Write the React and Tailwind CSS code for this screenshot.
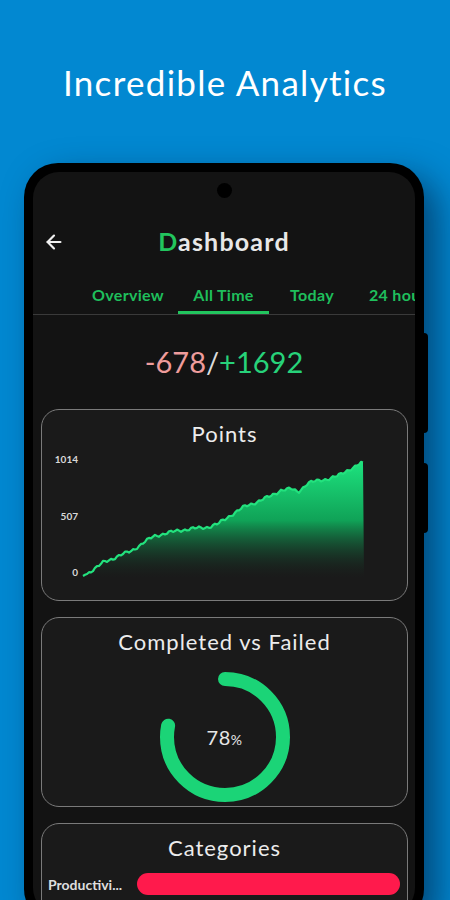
import React from 'react';

const anchors = [
    [82, 577], [95, 569], [103, 563], [130, 552], [153, 537], [180, 531], [207, 528],
    [217, 525], [230, 516], [243, 508], [270, 497], [280, 491], [290, 490], [297, 493],
    [307, 484], [330, 479], [337, 477], [347, 471], [363, 463],
];

// offsets so the chart svg can use page-like coordinates
const OX = 41;
const OY = 450;

function buildLine() {
    const pts = [];
    let i = 0;
    for (let x = 82; x <= 363; x += 2) {
        let k = 0;
        while (k < anchors.length - 2 && anchors[k + 1][0] < x) k++;
        const [x0, y0] = anchors[k];
        const [x1, y1] = anchors[k + 1];
        const t = (x - x0) / (x1 - x0 || 1);
        let y = y0 + (y1 - y0) * Math.min(1, Math.max(0, t));
        if (x > 84 && x < 361) y += Math.sin(i * 1.7) * 1.1 + Math.sin(i * 0.53) * 0.9;
        pts.push([x - OX, y - OY]);
        i++;
    }
    return pts;
}

function PointsChart() {
    const pts = buildLine();
    const line = pts.map((p, i) => `${i ? 'L' : 'M'}${p[0].toFixed(1)} ${p[1].toFixed(1)}`).join(' ');
    const area = `${line} L${363 - OX} ${578 - OY} L${82 - OX} ${578 - OY} Z`;
    return (
        <svg width="365" height="140" viewBox="0 0 365 140" className="block">
            <defs>
                <linearGradient id="pts" x1="0" y1={463 - OY} x2="0" y2={580 - OY} gradientUnits="userSpaceOnUse">
                    <stop offset="0" stopColor="#1de27e" />
                    <stop offset="0.5" stopColor="#10a257" />
                    <stop offset="1" stopColor="#1a1a1a" stopOpacity="0.1" />
                </linearGradient>
            </defs>
            <text x={77 - OX} y={464 - OY} textAnchor="end" fontSize="10" fontWeight="700" fill="#d8d8d8" fontFamily="Lato, sans-serif">1014</text>
            <text x={77 - OX} y={521 - OY} textAnchor="end" fontSize="10" fontWeight="700" fill="#d8d8d8" fontFamily="Lato, sans-serif">507</text>
            <text x={77 - OX} y={577 - OY} textAnchor="end" fontSize="10" fontWeight="700" fill="#d8d8d8" fontFamily="Lato, sans-serif">0</text>
            <path d={area} fill="url(#pts)" />
            <path d={line} fill="none" stroke="#23e27e" strokeWidth="2.2" strokeLinejoin="round" />
        </svg>
    );
}

function Donut({ value }) {
    const r = 58;
    const c = 2 * Math.PI * r;
    return (
        <div className="relative w-[132px] h-[132px]">
            <svg width="132" height="132" viewBox="0 0 132 132" className="block -rotate-90">
                <circle cx="66" cy="66" r={r} fill="none" stroke="#1bd477" strokeWidth="14"
                    strokeLinecap="round" strokeDasharray={`${c * value} ${c}`} />
            </svg>
            <div className="absolute inset-0 flex items-center justify-center text-[#e6e6e6] tracking-[0.5px]">
                <span className="text-[20px]">78</span><span className="text-[14px] mt-[5px]">%</span>
            </div>
        </div>
    );
}

function Card({ title, className, children }) {
    return (
        <div className={`border-[1.5px] border-[#7a7a7a] rounded-[18px] bg-[#1a1a1a] ${className}`}>
            <div className="text-center text-[22px] tracking-[1px] text-[#ececec] pt-[9px] leading-[30px]">{title}</div>
            {children}
        </div>
    );
}

export default function App() {
    return (
        <div className="w-[450px] h-[900px] overflow-hidden bg-[#0288d1] font-['Lato',sans-serif]">
            <div className="pt-[60px] h-[163px] text-center text-white text-[35px] tracking-[1.3px] leading-[44px]">
                Incredible Analytics
            </div>

            {/* phone */}
            <div className="relative ml-[24px] w-[400px] h-[760px] bg-black rounded-[34px] p-[9px] shadow-[14px_14px_34px_rgba(0,20,50,0.55)]">
                <div className="absolute right-[-4px] top-[170px] w-[4px] h-[100px] bg-black rounded-r" />
                <div className="absolute right-[-4px] top-[300px] w-[4px] h-[70px] bg-black rounded-r" />

                <div className="relative h-full bg-[#131313] rounded-[26px] overflow-hidden">
                    {/* camera hole */}
                    <div className="absolute left-[184px] top-[11px] w-[15px] h-[15px] rounded-full bg-black" />

                    {/* header */}
                    <div className="flex items-center h-[40px] mt-[50px] px-[10px]">
                        <svg width="22" height="22" viewBox="0 0 24 24" fill="none" stroke="#f0f0f0" strokeWidth="2.4" strokeLinecap="round" strokeLinejoin="round">
                            <path d="M19 12H5" />
                            <path d="M12 5l-7 7 7 7" />
                        </svg>
                        <div className="flex-1 text-center text-[25px] tracking-[1.2px] font-bold text-[#e8e8e8] pr-[22px]">
                            <span className="text-[#22c55e]">D</span>ashboard
                        </div>
                    </div>

                    {/* tabs (scrollable row, last one runs off the edge) */}
                    <div className="flex mt-[13px] h-[40px] overflow-hidden whitespace-nowrap text-[16px] tracking-[0.3px] font-bold text-[#1fbf5c] border-b border-[#3a3a3a]">
                        <div className="shrink-0 ml-[49px] w-[92px] flex items-center justify-center">Overview</div>
                        <div className="shrink-0 ml-[4px] w-[91px] flex items-center justify-center border-b-[3px] border-[#22c55e] pt-[3px]">All Time</div>
                        <div className="shrink-0 w-[86px] flex items-center justify-center">Today</div>
                        <div className="shrink-0 pl-[14px] flex items-center">24 hours</div>
                    </div>

                    {/* totals */}
                    <div className="text-center text-[29px] leading-[44px] mt-[25px]">
                        <span className="text-[#ef9c9c]">-678</span>
                        <span className="text-[#dcdcdc]">/</span>
                        <span className="text-[#27d27a]">+1692</span>
                    </div>

                    <div className="flex flex-col gap-[16px] mt-[25px] pl-[8px] pr-[7px]">
                        <Card title="Points" className="h-[192px]">
                            <PointsChart />
                        </Card>

                        <Card title="Completed vs Failed" className="h-[190px]">
                            <div className="flex justify-center mt-[14px]">
                                <Donut value={0.78} />
                            </div>
                        </Card>

                        <Card title="Categories" className="h-[200px]">
                            <div className="flex items-center mt-[10px] pl-[6px] pr-[7px]">
                                <div className="w-[84px] text-[14px] font-bold text-[#dedede] truncate">Productivi...</div>
                                <div className="flex-1 h-[22px] ml-[5px] rounded-full bg-[#ff1a4c]" />
                            </div>
                        </Card>
                    </div>
                </div>
            </div>
        </div>
    );
}
